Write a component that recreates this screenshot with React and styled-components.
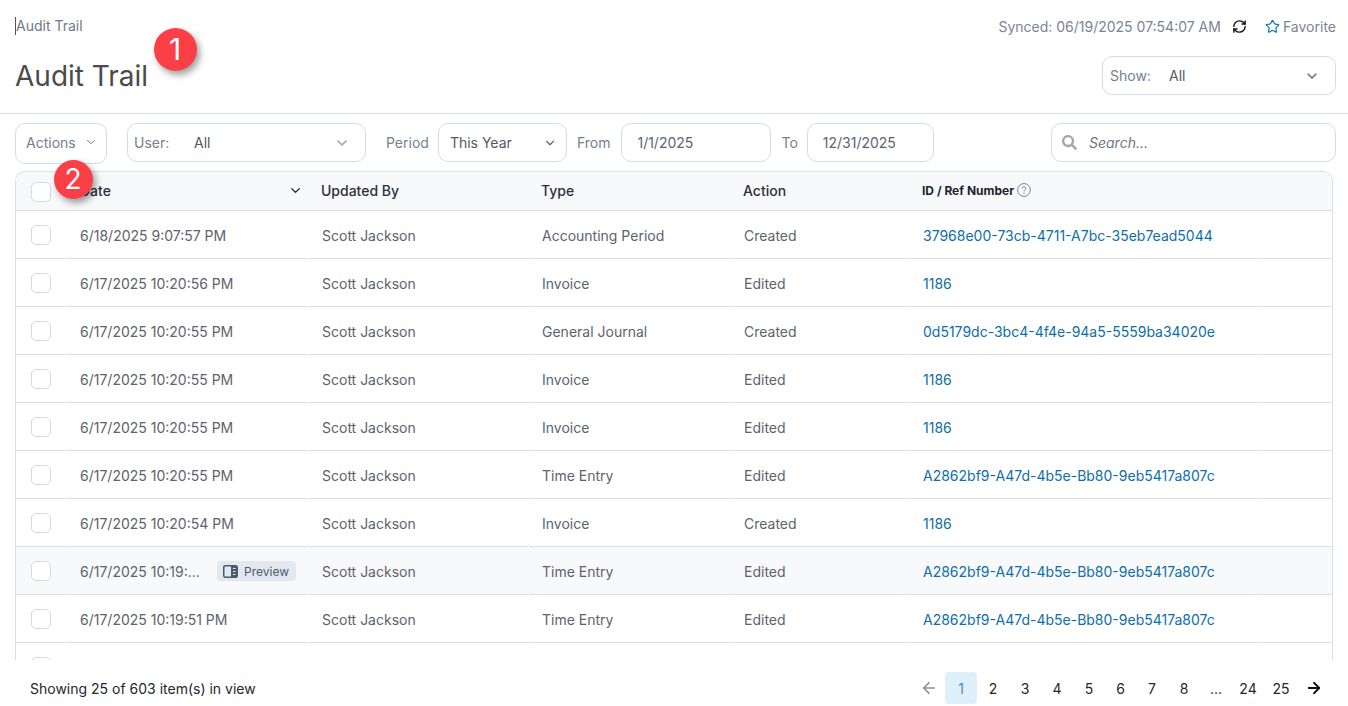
import React from "react";
import styled, { createGlobalStyle } from "styled-components";
import { ArrowLeft, ArrowRight, ChevronDown, RefreshCw, Star } from "lucide-react";
import { FaSearch } from "react-icons/fa";

const GlobalStyle = createGlobalStyle`
  html, body {
    margin: 0;
    height: 100%;
    overflow: hidden;
    background: #fff;
    font-family: "Inter", "Liberation Sans", sans-serif;
    font-size: 14px;
  }
`;

const Page = styled.div`
  position: relative;
  height: 706px;
  display: flex;
  flex-direction: column;
  overflow: hidden;
`;

const Header = styled.header`
  height: 113px;
  flex: none;
  display: flex;
  justify-content: space-between;
  padding: 0 12px 0 15px;
  border-bottom: 1px solid #d8dde6;
`;

const TitleBlock = styled.div`
  display: flex;
  flex-direction: column;
`;

const Crumb = styled.div`
  margin-top: 17px;
  height: 18px;
  border-left: 1px solid #4a5568;
  line-height: 18px;
  color: #6f7987;
`;

const Title = styled.h1`
  margin: 21px 0 0;
  font-size: 28px;
  line-height: 40px;
  font-weight: 400;
  color: #4a4a4a;
`;

const HeaderRight = styled.div`
  display: flex;
  flex-direction: column;
  align-items: flex-end;
`;

const SyncRow = styled.div`
  display: flex;
  align-items: center;
  height: 18px;
  margin-top: 17px;
  color: #7a8494;
`;

const SyncIcon = styled(RefreshCw)`
  margin-left: 11px;
  color: #111;
`;

const FavoriteStar = styled(Star)`
  margin-left: 18px;
  margin-right: 3px;
  color: #0f6ea3;
`;

const FilterBox = styled.div`
  box-sizing: border-box;
  display: flex;
  align-items: center;
  width: ${(p) => p.$width}px;
  height: 39px;
  padding: 0 ${(p) => p.$right || 6}px 0 ${(p) => p.$left || 6}px;
  flex: none;
  border: 1px solid #d6dce6;
  border-radius: 10px;
  background: #fff;
  color: #4f5965;
`;

const ShowBox = styled(FilterBox)`
  margin-top: 21px;
  padding-left: 7px;
`;

const BoxLabel = styled.span`
  width: ${(p) => p.$width}px;
  flex: none;
  color: #76808e;
`;

const BoxValue = styled.span`
  flex: 1;
`;

const Toolbar = styled.div`
  height: 48px;
  flex: none;
  display: flex;
  align-items: flex-start;
  padding: 9px 12px 0 15px;
`;

const ActionsButton = styled.button`
  box-sizing: border-box;
  width: 92px;
  height: 41px;
  display: flex;
  align-items: center;
  gap: 8px;
  margin: 0 20px 0 0;
  padding: 0 0 3px 10px;
  border: 1px solid #d6dce6;
  border-radius: 10px;
  background: #fff;
  font: inherit;
  color: #76808e;
`;

const FieldLabel = styled.span`
  margin: 0 ${(p) => p.$after || 10}px 0 ${(p) => p.$before}px;
  line-height: 39px;
  color: #76808e;
`;

const DateBox = styled(FilterBox)`
  padding-left: 15px;
  color: #5b6470;
`;

const SearchBox = styled(FilterBox)`
  margin-left: auto;
  padding-left: 10px;
  gap: 12px;
  font-style: italic;
  color: #6f7782;
`;

const TableWrap = styled.div`
  box-sizing: border-box;
  width: 1318px;
  height: 489px;
  flex: none;
  margin-left: 15px;
  overflow: hidden;
  border: 1px solid #d8dde6;
  border-bottom: 0;
  border-radius: 10px 10px 0 0;
`;

const Row = styled.div`
  display: grid;
  grid-template-columns: 50px 243px 220px 202px 179px 352px 1fr;
  height: ${(p) => (p.$head ? 39 : 48)}px;
  background: ${(p) => (p.$head || p.$active ? "#f8f9fb" : "#fff")};
`;

const Cell = styled.div`
  box-sizing: border-box;
  display: flex;
  align-items: center;
  min-width: 0;
  margin-right: 1px;
  padding-top: 2px;
  padding-left: ${(p) => p.$pad ?? 13}px;
  border-bottom: 1px solid #d8dde6;
  color: #5d636b;
  white-space: nowrap;
`;

const CheckCell = styled(Cell)`
  padding-top: 0;
  padding-left: 0;
`;

const HeadCell = styled(Cell)`
  padding-top: 0;
  padding-bottom: 2px;
  padding-left: ${(p) => p.$pad ?? 12}px;
  margin-right: 0;
  font-weight: 500;
  color: #2b303a;
`;

const HeadCheckCell = styled(CheckCell)`
  margin-right: 0;
  padding-top: 2px;
`;

const DateHead = styled(HeadCell)`
  justify-content: space-between;
  padding-right: 6px;
`;

const IdHead = styled(HeadCell)`
  gap: 3px;
  font-size: 12px;
  font-weight: 700;
  color: #1f2430;
`;

const LinkCell = styled(Cell)`
  color: #0f6ea3;
`;

const Check = styled.span`
  box-sizing: border-box;
  display: block;
  width: 20px;
  height: 20px;
  margin-left: 15px;
  border: 1px solid #d3dae5;
  border-radius: 5px;
  background: #fff;
`;

const Truncated = styled.span`
  flex: 1;
  overflow: hidden;
  text-overflow: ellipsis;
`;

const PreviewTag = styled.span`
  display: inline-flex;
  align-items: center;
  gap: 6px;
  width: 79px;
  height: 20px;
  box-sizing: border-box;
  margin: -2px 12px 0 0;
  padding: 1px 0 0 6px;
  border-radius: 4px;
  background: #e1e8f0;
  font-size: 12px;
  color: #4d5a6b;
`;

const Footer = styled.footer`
  flex: 1;
  display: flex;
  align-items: center;
  justify-content: space-between;
  padding: 10px 18px 0 30px;
  color: #23272e;
`;

const Pager = styled.nav`
  display: flex;
  align-items: center;
`;

const PageItem = styled.span`
  display: flex;
  align-items: center;
  justify-content: center;
  width: ${(p) => p.$width || 32}px;
  height: 32px;
  border-radius: 4px;
  background: ${(p) => (p.$active ? "#e0f0fb" : "transparent")};
  color: ${(p) => (p.$active ? "#3f8fc4" : "#23272e")};
`;

const Marker = styled.span`
  position: absolute;
  left: ${(p) => p.$x - p.$size / 2}px;
  top: ${(p) => p.$y - p.$size / 2}px;
  width: ${(p) => p.$size}px;
  height: ${(p) => p.$size}px;
  display: flex;
  align-items: center;
  justify-content: center;
  border-radius: 50%;
  background: #fb3f46;
  box-shadow: 3px 4px 7px rgba(0, 0, 0, 0.38);
  font-size: ${(p) => p.$font}px;
  color: #fff;
`;

const PreviewIcon = () => (
  <svg width="15" height="13" viewBox="0 0 15 13" fill="none">
    <rect x="0.75" y="0.75" width="13.5" height="11.5" rx="1.5" stroke="#4d5a6b" strokeWidth="1.5" />
    <rect x="8" y="1" width="6" height="11" fill="#4d5a6b" />
    <path d="M10 3.5h2.5M10 6.5h2.5M10 9.5h2.5" stroke="#e1e8f0" strokeWidth="1" />
  </svg>
);

const HelpIcon = () => (
  <svg width="14" height="14" viewBox="0 0 14 14" fill="none">
    <circle cx="7" cy="7" r="6.4" stroke="#6f7782" strokeWidth="0.9" />
    <path d="M5.3 5.4a1.75 1.75 0 1 1 2.6 1.6c-.6.35-.9.7-.9 1.3" stroke="#6f7782" strokeWidth="1" />
    <circle cx="7" cy="10.2" r="0.6" fill="#6f7782" />
  </svg>
);

const UUID_A = "A2862bf9-A47d-4b5e-Bb80-9eb5417a807c";

// the last row is cut by the table's bottom edge, only its checkbox shows
const rows = [
  { date: "6/18/2025 9:07:57 PM", user: "Scott Jackson", type: "Accounting Period", action: "Created", id: "37968e00-73cb-4711-A7bc-35eb7ead5044" },
  { date: "6/17/2025 10:20:56 PM", user: "Scott Jackson", type: "Invoice", action: "Edited", id: "1186" },
  { date: "6/17/2025 10:20:55 PM", user: "Scott Jackson", type: "General Journal", action: "Created", id: "0d5179dc-3bc4-4f4e-94a5-5559ba34020e" },
  { date: "6/17/2025 10:20:55 PM", user: "Scott Jackson", type: "Invoice", action: "Edited", id: "1186" },
  { date: "6/17/2025 10:20:55 PM", user: "Scott Jackson", type: "Invoice", action: "Edited", id: "1186" },
  { date: "6/17/2025 10:20:55 PM", user: "Scott Jackson", type: "Time Entry", action: "Edited", id: UUID_A },
  { date: "6/17/2025 10:20:54 PM", user: "Scott Jackson", type: "Invoice", action: "Created", id: "1186" },
  { date: "6/17/2025 10:19:...", user: "Scott Jackson", type: "Time Entry", action: "Edited", id: UUID_A, preview: true },
  { date: "6/17/2025 10:19:51 PM", user: "Scott Jackson", type: "Time Entry", action: "Edited", id: UUID_A },
  {},
];

const pages = [
  { label: "2" },
  { label: "3" },
  { label: "4" },
  { label: "5" },
  { label: "6", width: 31 },
  { label: "7" },
  { label: "8" },
  { label: "..." },
  { label: "24" },
  { label: "25", width: 34 },
];

export default function App() {
  return (
    <Page>
      <GlobalStyle />
      <Header>
        <TitleBlock>
          <Crumb>Audit Trail</Crumb>
          <Title>Audit Trail</Title>
        </TitleBlock>
        <HeaderRight>
          <SyncRow>
            Synced: 06/19/2025 07:54:07 AM
            <SyncIcon size={15} strokeWidth={2.2} />
            <FavoriteStar size={15} strokeWidth={1.8} />
            Favorite
          </SyncRow>
          <ShowBox $width={234} $right={15}>
            <BoxLabel $width={59}>Show:</BoxLabel>
            <BoxValue>All</BoxValue>
            <ChevronDown size={16} color="#5d6670" />
          </ShowBox>
        </HeaderRight>
      </Header>

      <Toolbar>
        <ActionsButton>
          Actions
          <ChevronDown size={14} color="#5d6670" strokeWidth={1.5} />
        </ActionsButton>
        <FilterBox $width={239} $right={15}>
          <BoxLabel $width={60}>User:</BoxLabel>
          <BoxValue>All</BoxValue>
          <ChevronDown size={16} color="#9aa3ae" strokeWidth={2.4} />
        </FilterBox>
        <FieldLabel $before={20} $after={9}>Period</FieldLabel>
        <FilterBox $width={129} $left={11} $right={9}>
          <BoxValue>This Year</BoxValue>
          <ChevronDown size={14} color="#5d6670" />
        </FilterBox>
        <FieldLabel $before={10} $after={11}>From</FieldLabel>
        <DateBox $width={150}>1/1/2025</DateBox>
        <FieldLabel $before={10} $after={9}>To</FieldLabel>
        <DateBox $width={127}>12/31/2025</DateBox>
        <SearchBox $width={285}>
          <FaSearch size={15} color="#a3a8ad" />
          Search...
        </SearchBox>
      </Toolbar>

      <TableWrap>
        <Row $head>
          <HeadCheckCell><Check /></HeadCheckCell>
          <DateHead $pad={14}>
            Date
            <ChevronDown size={15} color="#1f2430" strokeWidth={2.2} />
          </DateHead>
          <HeadCell>Updated By</HeadCell>
          <HeadCell>Type</HeadCell>
          <HeadCell>Action</HeadCell>
          <IdHead>
            ID / Ref Number
            <HelpIcon />
          </IdHead>
          <HeadCell />
        </Row>
        {rows.map((row, i) => (
          <Row key={i} $active={row.preview}>
            <CheckCell><Check /></CheckCell>
            <Cell $pad={14}>
              <Truncated>{row.date}</Truncated>
              {row.preview && (
                <PreviewTag>
                  <PreviewIcon />
                  Preview
                </PreviewTag>
              )}
            </Cell>
            <Cell>{row.user}</Cell>
            <Cell>{row.type}</Cell>
            <Cell>{row.action}</Cell>
            <LinkCell>{row.id}</LinkCell>
            <Cell />
          </Row>
        ))}
      </TableWrap>

      <Footer>
        <span>Showing 25 of 603 item(s) in view</span>
        <Pager>
          <PageItem><ArrowLeft size={18} color="#8a8f96" strokeWidth={2.2} /></PageItem>
          <PageItem $active>1</PageItem>
          {pages.map((p) => <PageItem key={p.label} $width={p.width}>{p.label}</PageItem>)}
          <PageItem><ArrowRight size={18} color="#111" strokeWidth={2.4} /></PageItem>
        </Pager>
      </Footer>

      <Marker $x={175} $y={49} $size={43} $font={30}>1</Marker>
      <Marker $x={73} $y={179} $size={39} $font={28}>2</Marker>
    </Page>
  );
}
